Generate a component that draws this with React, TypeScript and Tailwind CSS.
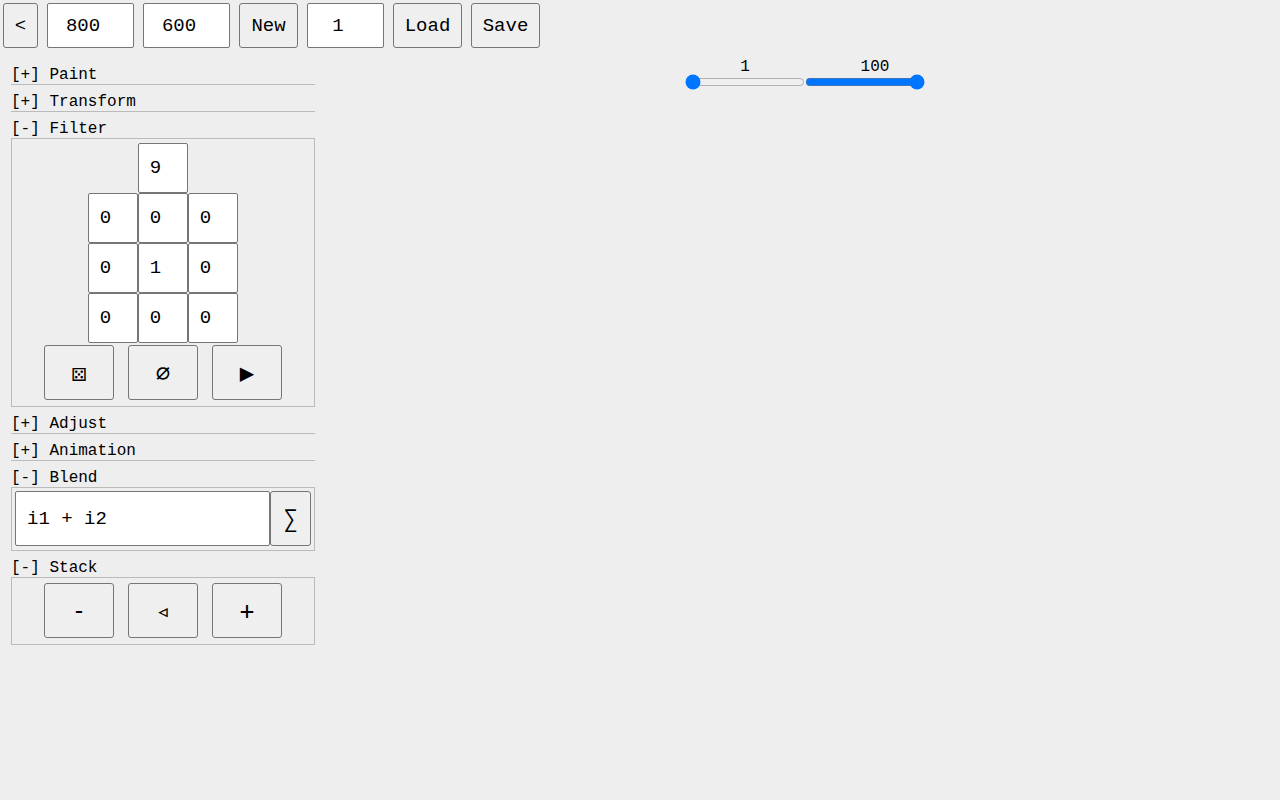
import { useState } from 'react';
import type { ReactNode } from 'react';

const field =
  'block rounded-[2px] border border-[#767676] bg-white px-2 text-[19px] text-black';
const barField = 'h-[45px] text-center';
const barButton =
  'h-[45px] rounded-[3px] border border-[#767676] bg-[#efefef] pt-[2px] text-[19px] hover:bg-[#e5e5e5]';
const padButton =
  "h-[55px] w-[70px] rounded-[3px] border border-[#767676] bg-[#efefef] font-['DejaVu_Sans_Mono',monospace] text-2xl hover:bg-[#e5e5e5]";

const IDENTITY = [0, 0, 0, 0, 1, 0, 0, 0, 0];

interface SectionProps {
  title: string;
  defaultOpen?: boolean;
  children?: ReactNode;
}

function Section({ title, defaultOpen = false, children }: SectionProps) {
  const [open, setOpen] = useState(defaultOpen);

  return (
    <section>
      <button
        onClick={() => setOpen(!open)}
        aria-expanded={open}
        className="block h-[18px] w-full text-left text-base leading-[18px]"
      >
        [{open ? '-' : '+'}] {title}
      </button>
      {open ? (
        <div className="border border-[#bbbbbb]">{children}</div>
      ) : (
        <div className="border-t border-[#bbbbbb]" />
      )}
    </section>
  );
}

function KernelFilter() {
  const [divisor, setDivisor] = useState(9);
  const [kernel, setKernel] = useState<number[]>(IDENTITY);

  const setCell = (idx: number, value: number) => {
    setKernel(kernel.map((k, i) => (i === idx ? value : k)));
  };

  const randomize = () => {
    setKernel(kernel.map(() => Math.floor(Math.random() * 19) - 9));
  };

  return (
    <div className="flex flex-col items-center pt-1 pb-[6px]">
      <input
        type="number"
        aria-label="Divisor"
        value={divisor}
        onChange={(e) => setDivisor(Number(e.target.value))}
        className={`${field} h-[50px] w-[50px] text-center`}
      />
      <div className="grid grid-cols-[repeat(3,50px)]">
        {kernel.map((value, idx) => (
          <input
            key={idx}
            type="number"
            aria-label={`Kernel cell ${idx + 1}`}
            value={value}
            onChange={(e) => setCell(idx, Number(e.target.value))}
            className={`${field} h-[50px] w-[50px] text-center`}
          />
        ))}
      </div>
      <div className="mt-[2px] flex gap-[14px]">
        <button onClick={randomize} aria-label="Randomize" className={padButton}>
          ⚄
        </button>
        <button onClick={() => setKernel(IDENTITY)} aria-label="Reset" className={padButton}>
          ∅
        </button>
        <button aria-label="Apply" className={padButton}>
          ▶
        </button>
      </div>
    </div>
  );
}

export default function App() {
  const [low, setLow] = useState(1);
  const [high, setHigh] = useState(100);

  return (
    <div className="min-h-screen bg-[#eeeeee] font-['Liberation_Mono',monospace] text-black">
      {/* Toolbar */}
      <header className="flex gap-[9px] pt-[3px] pl-[3px]">
        <button className={`${barButton} w-[35px]`}>&lt;</button>
        <input type="number" aria-label="Width" defaultValue={800} className={`${field} ${barField} w-[87px]`} />
        <input type="number" aria-label="Height" defaultValue={600} className={`${field} ${barField} w-[87px]`} />
        <button className={`${barButton} w-[59px]`}>New</button>
        <input type="number" aria-label="Scale" defaultValue={1} className={`${field} ${barField} w-[77px]`} />
        <button className={`${barButton} w-[69px]`}>Load</button>
        <button className={`${barButton} w-[69px]`}>Save</button>
      </header>

      <div className="flex">
        {/* Tools */}
        <aside className="w-[340px] shrink-0 pt-[18px] pl-[11px]">
          <div className="flex w-[304px] flex-col gap-2">
            <Section title="Paint" />
            <Section title="Transform" />
            <Section title="Filter" defaultOpen>
              <KernelFilter />
            </Section>
            <Section title="Adjust" />
            <Section title="Animation" />
            <Section title="Blend" defaultOpen>
              <div className="flex px-[3px] pt-[3px] pb-1">
                <input
                  type="text"
                  aria-label="Blend formula"
                  defaultValue="i1 + i2"
                  className={`${field} h-[55px] min-w-0 flex-1 pl-[11px]`}
                />
                <button
                  aria-label="Blend"
                  className="h-[55px] w-[41px] rounded-[3px] border border-[#767676] bg-[#efefef] font-['DejaVu_Sans_Mono',monospace] text-2xl hover:bg-[#e5e5e5]"
                >
                  ∑
                </button>
              </div>
            </Section>
            <Section title="Stack" defaultOpen>
              <div className="flex justify-center gap-[14px] pt-[5px] pb-[6px]">
                <button className={padButton}>-</button>
                <button aria-label="Previous" className={padButton}>
                  ◃
                </button>
                <button className={padButton}>+</button>
              </div>
            </Section>
          </div>
        </aside>

        {/* Frame range */}
        <main className="flex flex-1 justify-center pt-3">
          <div className="w-[260px]">
            <div className="grid grid-cols-2 text-center text-base leading-[14px]">
              <label htmlFor="low">{low}</label>
              <label htmlFor="high">{high}</label>
            </div>
            <div className="flex pl-[5px]">
              <input
                id="low"
                type="range"
                min={1}
                max={100}
                value={low}
                onChange={(e) => setLow(Number(e.target.value))}
                className="h-4 w-[120px]"
              />
              <input
                id="high"
                type="range"
                min={1}
                max={100}
                value={high}
                onChange={(e) => setHigh(Number(e.target.value))}
                className="h-4 w-[120px]"
              />
            </div>
          </div>
        </main>
      </div>
    </div>
  );
}
